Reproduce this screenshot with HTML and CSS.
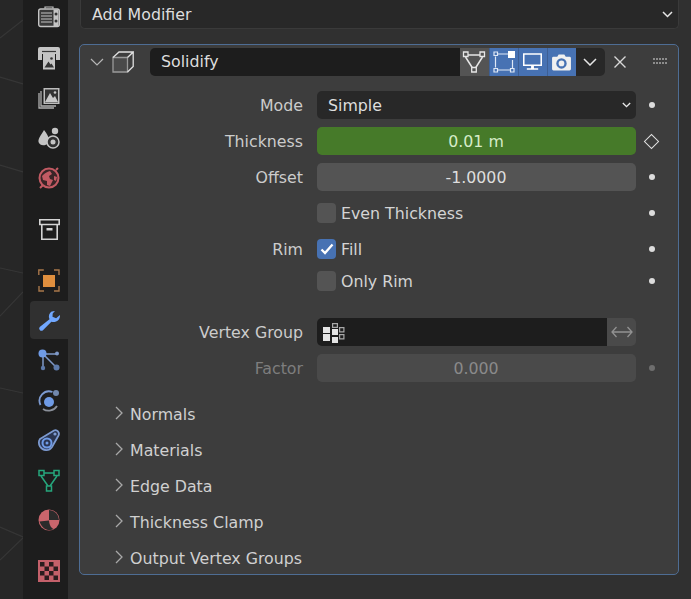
FILE: index.html
```html
<!DOCTYPE html>
<html lang="en">
<head>
<meta charset="utf-8">
<title>Solidify modifier</title>
<link rel="stylesheet" href="styles.css">
</head>
<body>
<div class="app">
  <div class="viewport">
    <svg class="viewport-lines" width="23" height="599" viewBox="0 0 23 599">
      <path d="M0 38L23 20M0 77L23 84M0 165L23 172M0 268L23 273M0 316L23 292M0 388L23 393M0 560L23 538M0 527L23 537" stroke="#363636" stroke-width="1.200" fill="none"/>
    </svg>
  </div>
  <nav class="tabs">
    <div class="tab tab-first"><svg width="22" height="22" viewBox="0 0 22 22"><path d="M7 2.500V1h8v1.500" fill="none" stroke="#c4c4c4" stroke-width="1.200"/><rect x=".7" y="3" width="20.600" height="17.500" rx="2" fill="#3a3a3a" stroke="#c4c4c4" stroke-width="1.400"/><path d="M3 7h11M3 10h11M3 13h11M3 16h11" stroke="#c4c4c4" stroke-width="1"/><path d="M15.500 3.500h5v16.500h-5z" fill="#c4c4c4"/><circle cx="18" cy="8" r="1.500" fill="#333"/><circle cx="18" cy="15" r="1.500" fill="#333"/></svg></div>
    <div class="tab"><svg width="22" height="23" viewBox="0 0 22 23"><path d="M2 0h18a2 2 0 0 1 2 2v11h-4V7H4v6H0V2a2 2 0 0 1 2-2z" fill="#c4c4c4"/><path d="M5 6h12v16.500H5z" fill="#c4c4c4"/><path d="M4 4.500h14" stroke="#3a3a3a" stroke-width="1.200"/><path d="M6.500 20.500l4-6 2 3 1-1 2.500 4z" fill="#333"/><circle cx="13.500" cy="11.500" r="1.300" fill="#333"/></svg></div>
    <div class="tab"><svg width="22" height="22" viewBox="0 0 22 22"><path d="M1 6v15h15M3 4v15h15" fill="none" stroke="#b0b0b0" stroke-width="1.300"/><rect x="5.500" y="1" width="16" height="16" fill="#bdbdbd"/><rect x="7" y="2.500" width="13" height="13" fill="#333"/><path d="M7 15l5-9 3 5 2-2 3 6z" fill="#c8c8c8"/><circle cx="17" cy="5.500" r="1.300" fill="#c8c8c8"/></svg></div>
    <div class="tab"><svg width="22" height="24" viewBox="0 0 22 24"><path d="M6 4c3 4 5 7 5 10a5.500 5.500 0 0 1-10.500 2C0 12 4 8 6 4z" fill="#c4c4c4"/><circle cx="17" cy="5" r="3.200" fill="#c4c4c4"/><circle cx="15" cy="16" r="6" fill="#303030" stroke="#c4c4c4" stroke-width="1.500"/><circle cx="15" cy="16" r="2.500" fill="#c4c4c4"/></svg></div>
    <div class="tab"><svg width="24" height="24" viewBox="0 0 24 24"><circle cx="12" cy="12" r="9.500" fill="#3a2527" stroke="#c25a63" stroke-width="2"/><path d="M5 10c3-3 5-4 8-5l2 3-3 2 1 3 3 1-3 6-3-1v-4l-4-1z" fill="#c25a63"/><path d="M17 10l3 1-1 4-2-1z" fill="#c25a63"/><path d="M3 22l3-3M19 4l2-2" stroke="#c25a63" stroke-width="2"/></svg></div>
    <div class="tab tab-gap"><svg width="21" height="21" viewBox="0 0 21 21"><path d="M.8.800h19.400v4.700H.8zM2.800 5.500v14.700h15.400V5.500" fill="none" stroke="#d4d4d4" stroke-width="1.600"/><rect x="7.500" y="9" width="6" height="2.500" fill="#d4d4d4"/></svg></div>
    <div class="tab tab-gap"><svg width="22" height="23" viewBox="0 0 22 23"><path d="M.8 6V1h5M16 1h5v5M21 17v5h-5M6 22H1v-5" fill="none" stroke="#a8774a" stroke-width="1.400"/><rect x="5" y="6" width="12" height="12" fill="#e08f3e"/></svg></div>
    <div class="tab tab-active"><svg width="23" height="23" viewBox="0 0 23 23"><path d="M14 2.200a6 6 0 0 0-2.500 8L1.700 18a2.300 2.300 0 0 0 3 3.400l8.700-8.700a6.500 6.500 0 0 0 8.600-6.700l-3.900 3.300-3.600-1.600.2-3.300 2.200-2.300a8 8 0 0 0-2.900.4z" fill="#71a8ff"/></svg></div>
    <div class="tab"><svg width="24" height="24" viewBox="0 0 24 24"><path d="M6 6h15M6 6v14M6 6l13 13" stroke="#7f99c8" stroke-width="1.500"/><circle cx="5.500" cy="5.500" r="4" fill="#6f9be6"/><circle cx="20" cy="5.500" r="2" fill="#7f99c8"/><circle cx="6" cy="20" r="2.200" fill="#5f7bab"/><circle cx="19.500" cy="19.500" r="3" fill="#5f7bab"/></svg></div>
    <div class="tab"><svg width="24" height="24" viewBox="0 0 24 24"><path d="M3.500 17a9.500 9.500 0 0 1 12-13" fill="none" stroke="#7c9ad0" stroke-width="1.800"/><path d="M6 21a10 10 0 0 0 14-3" fill="none" stroke="#8a8f99" stroke-width="1.800"/><circle cx="12" cy="14" r="5" fill="#6f9be6"/><circle cx="19" cy="5" r="3" fill="#7188ad"/></svg></div>
    <div class="tab"><svg width="24" height="24" viewBox="0 0 24 24"><path d="M3 11L17 2.500c3-1.500 6 2 4.500 5L15 19c-3 4.500-9 4-12-.5-1.300-2.500-1.500-5.500 0-7.500z" fill="#2a3550" stroke="#7c9ad0" stroke-width="1.800"/><circle cx="10" cy="15" r="4.500" fill="none" stroke="#6f9be6" stroke-width="2"/><circle cx="10" cy="15" r="1.500" fill="#6f9be6"/><circle cx="18" cy="6" r="1.600" fill="#7c9ad0"/></svg></div>
    <div class="tab"><svg width="22" height="23" viewBox="0 0 22 23"><path d="M5 4h12M3 7l7 10M19 7l-7 10" stroke="#26a67c" stroke-width="1.500"/><path d="M1 1.500h5v5H1zM16 1.500h5v5h-5zM8.500 17h5v5h-5z" fill="#1d1d1d" stroke="#26a67c" stroke-width="1.500"/></svg></div>
    <div class="tab"><svg width="22" height="22" viewBox="0 0 22 22"><circle cx="11" cy="11" r="10.500" fill="#c9656c"/><path d="M11 11V1a10 10 0 0 1 10 10z" fill="#2b2b2b"/><path d="M1.500 12.500c2 6 6 8.500 10 8.500 1.500 0 3-.4 4-1-2-1-4-3-4.500-8.500z" fill="#2b2b2b"/></svg></div>
    <div class="tab tab-gap"><svg width="22" height="22" viewBox="0 0 22 22"><rect width="22" height="22" fill="#c4606a"/><path d="M2 2h4.500v4.500H2zM11 2h4.500v4.500H11zM6.500 6.500H11V11H6.500zM15.500 6.500H20V11h-4.500zM2 11h4.500v4.500H2zM11 11h4.500v4.500H11zM6.500 15.500H11V20H6.500zM15.500 15.500H20V20h-4.500z" fill="#2a1c1e"/></svg></div>
  </nav>
  <main class="editor">
    <div class="add-modifier">
      <span>Add Modifier</span>
      <svg class="caret" width="11" height="7" viewBox="0 0 11 7"><path d="M1 1l4.500 4.500L10 1" fill="none" stroke="#e6e6e6" stroke-width="1.500"/></svg>
    </div>
    <section class="panel">
      <header class="panel-head">
        <svg class="head-chevron" width="14" height="8" viewBox="0 0 14 8"><path d="M1 1l6 6 6-6" fill="none" stroke="#b5b5b5" stroke-width="1.200"/></svg>
        <svg class="cube" width="22" height="22" viewBox="0 0 22 22"><path d="M1 6.500h14.500V21H1z" fill="#4a4a4a" stroke="#9a9a9a" stroke-width="1.300"/><path d="M1 6.500L7 1h14.200l-5.700 5.500M21.200 1v14.500L15.500 21" fill="none" stroke="#e0e0e0" stroke-width="1.300"/></svg>
        <div class="name-field">Solidify</div>
        <div class="mode-group">
          <div class="mode mode-grey"><svg width="24" height="24" viewBox="0 0 24 24"><path d="M5 5h14M3.500 7l7 11M20.500 7l-7 11" stroke="#e6e6e6" stroke-width="1.500"/><path d="M1.500 2h4.500v4.500H1.500zM18 2h4.500v4.500H18zM9.700 17.500h4.600V22H9.700z" fill="#545454" stroke="#e6e6e6" stroke-width="1.300"/></svg></div>
          <div class="mode"><svg width="22" height="22" viewBox="0 0 22 22"><path d="M5 3h10M2.500 5.500v11M5 19h12M19.500 9v8" stroke="#dfe8f6" stroke-width="1.200"/><path d="M1 1h3.500v3.500H1zM1 17.500h3.500V21H1zM17.500 17.500H21V21h-3.500z" fill="#4772b3" stroke="#dfe8f6" stroke-width="1.200"/><rect x="15" y="0" width="7" height="7" fill="#fff"/></svg></div>
          <div class="mode"><svg width="19" height="18" viewBox="0 0 20 19"><path d="M.8 1h18.400v12H.8z" fill="none" stroke="#fff" stroke-width="1.600"/><path d="M8.500 13h3v3h-3zM4 16h12v1.600H4z" fill="#fff"/></svg></div>
          <div class="mode"><svg width="19" height="17" viewBox="0 0 20 18"><path d="M1.500 3h4l1.500-2.500h6L14.500 3h4A1.500 1.500 0 0 1 20 4.500V16a1.500 1.500 0 0 1-1.500 1.500h-17A1.500 1.500 0 0 1 0 16V4.500A1.500 1.500 0 0 1 1.500 3z" fill="#f0f0f0"/><circle cx="10" cy="10" r="5.500" fill="#4772b3"/><circle cx="10" cy="10" r="3" fill="#f0f0f0"/></svg></div>
          <div class="mode mode-menu"><svg width="14" height="8" viewBox="0 0 14 8"><path d="M1 1l6 6 6-6" fill="none" stroke="#e6e6e6" stroke-width="1.500"/></svg></div>
        </div>
        <svg class="close" width="14" height="14" viewBox="0 0 14 14"><path d="M1.500 1.500l11 11M12.500 1.500l-11 11" stroke="#d8d8d8" stroke-width="1.400"/></svg>
        <svg class="grip" width="15" height="6" viewBox="0 0 15 6"><path d="M0 1h15M0 5h15" stroke="#a8a8a8" stroke-width="1.600" stroke-dasharray="2 1"/></svg>
      </header>

      <div class="rows">
        <div class="row"><label class="lbl">Mode</label>
          <div class="ctl select"><span>Simple</span><svg width="9" height="6" viewBox="0 0 11 7"><path d="M1 1l4.500 4.500L10 1" fill="none" stroke="#e6e6e6" stroke-width="1.700"/></svg></div>
          <span class="dot"></span></div>
        <div class="row"><label class="lbl">Thickness</label>
          <div class="ctl num num-green">0.01 m</div>
          <span class="diamond"></span></div>
        <div class="row"><label class="lbl">Offset</label>
          <div class="ctl num">-1.0000</div>
          <span class="dot"></span></div>
        <div class="row"><span></span>
          <div class="check-line"><span class="box"></span><span>Even Thickness</span></div>
          <span class="dot"></span></div>
        <div class="row row-tight"><label class="lbl">Rim</label>
          <div class="check-line"><span class="box box-on"><svg width="14" height="12" viewBox="0 0 14 12"><path d="M1.500 6.500l3.500 3.500 7.500-8.500" fill="none" stroke="#fff" stroke-width="2.300"/></svg></span><span>Fill</span></div>
          <span class="dot"></span></div>
        <div class="row row-spaced"><span></span>
          <div class="check-line"><span class="box"></span><span>Only Rim</span></div>
          <span class="dot"></span></div>
        <div class="row"><label class="lbl">Vertex Group</label>
          <div class="vg">
            <div class="vg-field"><svg width="22" height="22" viewBox="0 0 22 22"><path d="M0 6h7v6H0zM0 13h7v7H0zM9 8h6v6H9zM9 16h6v6H9z" fill="#e4e4e4"/><path d="M9.600 2.600h4.800v3.800H9.600zM16.600 6.600h4.300v4.300h-4.300zM16.600 13.600h4.300v4.300h-4.300z" fill="none" stroke="#a8a8a8" stroke-width="1.200"/></svg></div>
            <div class="vg-invert"><svg width="22" height="12" viewBox="0 0 22 12"><path d="M5.500 1L1 6l4.500 5M16.500 1L21 6l-4.500 5M1 6h20" fill="none" stroke="#929292" stroke-width="1.300"/></svg></div>
          </div>
          <span></span></div>
        <div class="row row-off"><label class="lbl">Factor</label>
          <div class="ctl num">0.000</div>
          <span class="dot"></span></div>
      </div>

      <div class="subs">
        <div class="sub"><svg width="8" height="14" viewBox="0 0 8 14"><path d="M1 1l6 6-6 6" fill="none" stroke="#a8a8a8" stroke-width="1.300"/></svg><span>Normals</span></div>
        <div class="sub"><svg width="8" height="14" viewBox="0 0 8 14"><path d="M1 1l6 6-6 6" fill="none" stroke="#a8a8a8" stroke-width="1.300"/></svg><span>Materials</span></div>
        <div class="sub"><svg width="8" height="14" viewBox="0 0 8 14"><path d="M1 1l6 6-6 6" fill="none" stroke="#a8a8a8" stroke-width="1.300"/></svg><span>Edge Data</span></div>
        <div class="sub"><svg width="8" height="14" viewBox="0 0 8 14"><path d="M1 1l6 6-6 6" fill="none" stroke="#a8a8a8" stroke-width="1.300"/></svg><span>Thickness Clamp</span></div>
        <div class="sub"><svg width="8" height="14" viewBox="0 0 8 14"><path d="M1 1l6 6-6 6" fill="none" stroke="#a8a8a8" stroke-width="1.300"/></svg><span>Output Vertex Groups</span></div>
      </div>
    </section>
  </main>
</div>
</body>
</html>
```

FILE: styles.css
```css
* { box-sizing: border-box; }
html, body { margin: 0; height: 100%; overflow: hidden; }
body { font-family: "DejaVu Sans", sans-serif; font-size: 15.8px; color: #d8d8d8; background: #303030; }
svg { display: block; flex: none; }

.app { display: flex; width: 691px; height: 599px; }

.viewport { width: 23px; background: #272727; flex: none; }

.tabs { width: 45px; flex: none; background: #1d1d1d; padding: 0 0 0 7px; display: flex; flex-direction: column; }
.tab { height: 40px; width: 38px; display: flex; align-items: center; justify-content: center; flex: none; }
.tab-first { height: 38px; padding-bottom: 4px; }
.tab-gap { margin-top: 11px; }
.tab-active { background: #303030; border-radius: 4px 0 0 4px; height: 38px; margin: 1px 0; }

.editor { flex: 1; min-width: 0; padding: 0 12px 0 11px; background: #303030; }

.add-modifier { height: 29px; margin: 0 0 15px 1px; padding: 0 5px 0 11px; display: flex; align-items: center; justify-content: space-between; background: #282828; border: 1px solid #3a3a3a; border-top: 0; border-radius: 0 0 5px 5px; color: #dedede; }

.panel { width: 600px; height: 531px; background: #3d3d3d; border: 1px solid #4e6d94; border-radius: 5px; overflow: hidden; }

.panel-head { height: 28px; margin-top: 3px; display: flex; align-items: center; padding-left: 10px; }
.head-chevron { margin-right: 8px; margin-top: -1px; }
.cube { margin-right: 16px; }
.name-field { width: 310px; height: 28px; padding: 0 11px; line-height: 27px; background: #1d1d1d; border-radius: 5px 0 0 5px; color: #dedede; }
.mode-group { display: flex; height: 28px; }
.mode { width: 29px; background: #4772b3; display: flex; align-items: center; justify-content: center; border-left: 1px solid #3d5f94; padding-right: 1px; }
.mode-grey { background: #545454; border-left: 0; padding-right: 2px; }
.mode-menu { background: #282828; border-left: 0; border-radius: 0 5px 5px 0; }
.close { margin-left: 8px; }
.grip { margin-left: 26px; margin-top: -3px; }

.rows { padding: 15px 0 0; display: flex; flex-direction: column; }
.row { height: 28px; margin-bottom: 8px; display: grid; grid-template-columns: 223px 333px 32px; align-items: center; }
.row-tight { margin-bottom: 4px; }
.row-spaced { margin-bottom: 23px; }
.row-off { margin-bottom: 0; }
.lbl { text-align: right; color: #cccccc; }
.row > .ctl, .row > .check-line, .row > .vg { margin-left: 14px; width: 319px; }

.ctl { height: 28px; border-radius: 5px; }
.select { background: #282828; display: flex; align-items: center; justify-content: space-between; padding: 0 5px 0 11px; color: #dedede; }
.num { background: #545454; display: flex; align-items: center; justify-content: center; color: #dedede; padding-right: 1px; }
.num-green { background: #467a29; color: #d6ecc8; }

.check-line { display: flex; align-items: center; gap: 5px; color: #d4d4d4; }
.box { width: 19px; height: 20px; background: #545454; border-radius: 4px; display: flex; align-items: center; justify-content: center; }
.box-on { background: #4772b3; }

.dot { justify-self: center; width: 6px; height: 6px; border-radius: 50%; background: #dcdcdc; }
.diamond { justify-self: center; width: 11px; height: 11px; margin-right: 2px; transform: rotate(45deg); border: 1.500px solid #e0e0e0; }

.vg { display: flex; height: 28px; }
.vg-field { flex: 1; background: #1d1d1d; border-radius: 5px 0 0 5px; display: flex; align-items: center; padding-left: 6px; }
.vg-invert { width: 29px; background: #4a4a4a; border-radius: 0 5px 5px 0; display: flex; align-items: center; justify-content: center; }

.row-off .lbl { color: #7e7e7e; }
.row-off .num { background: #4a4a4a; color: #8a8a8a; }
.row-off .dot { background: #6e6e6e; }

.subs { padding: 18px 0 0 35px; display: flex; flex-direction: column; gap: 8px; }
.sub { height: 28px; display: flex; align-items: center; gap: 7px; color: #d0d0d0; }
.sub svg { margin-top: -2px; }
```
